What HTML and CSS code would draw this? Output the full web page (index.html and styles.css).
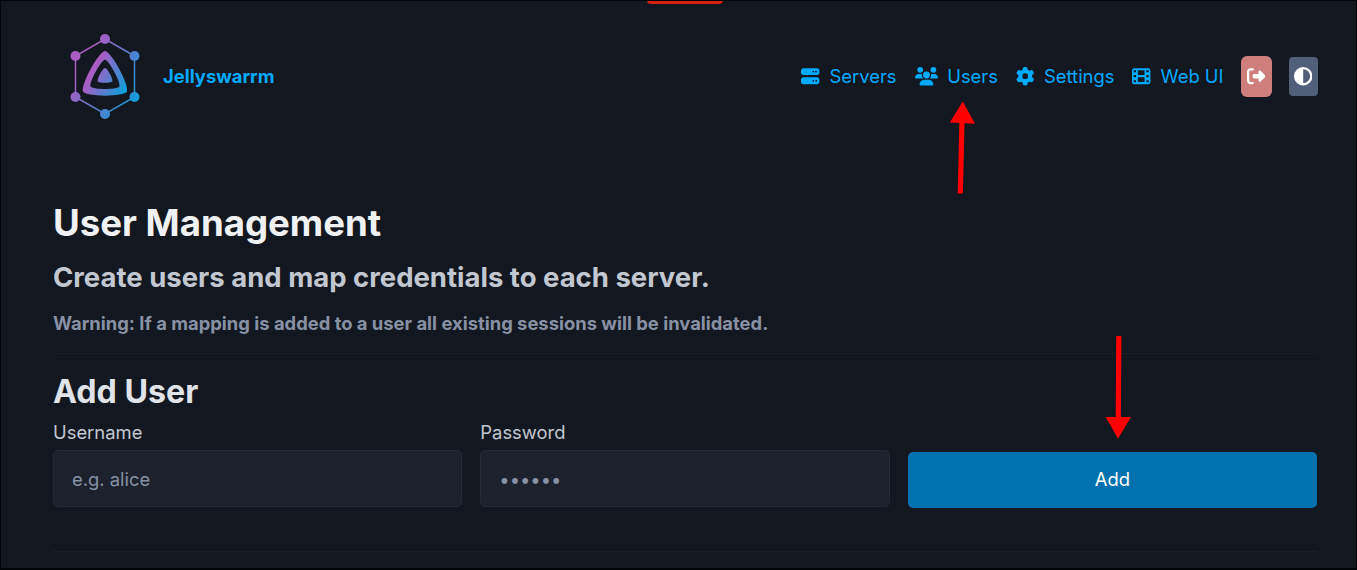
FILE: index.html
```html
<!DOCTYPE html>
<html lang="en">
<head>
<meta charset="utf-8">
<title>Jellyswarrm</title>
<link rel="stylesheet" href="styles.css">
</head>
<body>
<div class="page">
  <div class="top-indicator"></div>
  <header class="header">
    <a class="brand">
      <svg class="logo" viewBox="0 0 104 112">
        <defs>
          <linearGradient id="jelly" gradientUnits="userSpaceOnUse" x1="38" y1="54" x2="74" y2="74">
            <stop offset="0" stop-color="#aa5cc3"/><stop offset="1" stop-color="#00a4dc"/>
          </linearGradient>
          <linearGradient id="ring" gradientUnits="userSpaceOnUse" x1="30" y1="42" x2="94" y2="80">
            <stop offset="0" stop-color="#aa5cc3"/><stop offset="1" stop-color="#00a4dc"/>
          </linearGradient>
        </defs>
        <path d="M52 19 81.500 36V77L52 94 22.500 77V36Z" fill="none" stroke="url(#ring)" stroke-width="1.500"/>
        <g fill="url(#ring)">
          <circle cx="52" cy="19" r="5"/><circle cx="81.500" cy="36" r="5"/><circle cx="81.500" cy="77" r="5"/>
          <circle cx="52" cy="94" r="5"/><circle cx="22.500" cy="77" r="5"/><circle cx="22.500" cy="36" r="5"/>
        </g>
        <g fill="url(#jelly)" fill-rule="evenodd">
          <path d="M52 31C46 31 27.500 65 30 71.500C32.500 77 71.500 77 74 71.500C76.500 65 58 31 52 31ZM52 39.700C55.500 39.700 68 62 66.500 66.300C65 70 39 70 37.500 66.300C36 62 48.500 39.700 52 39.700Z"/>
          <path d="M52 48C49.500 48 43.700 59.500 44.700 61.500C45.700 63.200 58.300 63.200 59.300 61.500C60.300 59.500 54.500 48 52 48Z"/>
        </g>
      </svg>
      <strong class="brand-name">Jellyswarrm</strong>
    </a>
    <nav class="nav">
      <a class="nav-link"><svg class="icon" viewBox="0 0 512 512"><path d="M64 32C28.700 32 0 60.700 0 96v64c0 35.300 28.700 64 64 64H448c35.300 0 64-28.700 64-64V96c0-35.300-28.700-64-64-64H64zm280 72a24 24 0 1 1 0 48 24 24 0 1 1 0-48zm48 24a24 24 0 1 1 48 0 24 24 0 1 1 -48 0zM64 288c-35.300 0-64 28.700-64 64v64c0 35.300 28.700 64 64 64H448c35.300 0 64-28.700 64-64V352c0-35.300-28.700-64-64-64H64zm280 72a24 24 0 1 1 0 48 24 24 0 1 1 0-48zm56 24a24 24 0 1 1 48 0 24 24 0 1 1 -48 0z"/></svg>Servers</a>
      <a class="nav-link"><svg class="icon icon-wide" viewBox="0 0 640 512"><path d="M144 0a80 80 0 1 1 0 160A80 80 0 1 1 144 0zM512 0a80 80 0 1 1 0 160A80 80 0 1 1 512 0zM0 298.700C0 239.800 47.800 192 106.700 192h42.700c15.900 0 31 3.500 44.600 9.700c-1.300 7.200-1.900 14.700-1.900 22.300c0 38.200 16.800 72.500 43.300 96H21.300C9.600 320 0 310.400 0 298.700zM405.300 320c26.600-23.500 43.300-57.800 43.300-96c0-7.600-.7-15-1.900-22.300c13.600-6.300 28.700-9.700 44.600-9.700h42.700C592.200 192 640 239.800 640 298.700c0 11.800-9.600 21.300-21.300 21.300H405.300zM224 224a96 96 0 1 1 192 0 96 96 0 1 1 -192 0zM128 485.300C128 411.700 187.700 352 261.300 352H378.700C452.300 352 512 411.700 512 485.300c0 14.700-11.900 26.700-26.700 26.700H154.700c-14.700 0-26.700-11.900-26.700-26.700z"/></svg>Users</a>
      <a class="nav-link"><svg class="icon" viewBox="0 0 512 512"><path d="M495.900 166.600c3.200 8.700 .5 18.400-6.400 24.600l-43.300 39.400c1.100 8.300 1.700 16.800 1.700 25.400s-.6 17.100-1.700 25.400l43.300 39.400c6.900 6.200 9.600 15.900 6.400 24.600c-4.400 11.900-9.700 23.300-15.800 34.300l-4.700 8.100c-6.600 11-14 21.400-22.100 31.200c-5.900 7.200-15.700 9.600-24.500 6.800l-55.700-17.700c-13.400 10.300-28.200 18.900-44 25.400l-12.500 57.100c-2 9.100-9 16.300-18.200 17.800c-13.800 2.300-28 3.500-42.500 3.500s-28.700-1.200-42.500-3.500c-9.200-1.500-16.200-8.700-18.200-17.800l-12.500-57.100c-15.800-6.500-30.600-15.100-44-25.400L83.100 425.900c-8.800 2.800-18.600 .3-24.500-6.800c-8.100-9.800-15.500-20.200-22.100-31.200l-4.700-8.100c-6.100-11-11.400-22.400-15.800-34.300c-3.200-8.700-.5-18.400 6.400-24.600l43.300-39.400C64.600 273.100 64 264.600 64 256s.6-17.100 1.700-25.400L22.400 191.200c-6.900-6.200-9.600-15.900-6.400-24.600c4.400-11.900 9.700-23.300 15.800-34.300l4.700-8.100c6.600-11 14-21.400 22.100-31.200c5.900-7.200 15.700-9.600 24.500-6.800l55.700 17.700c13.400-10.300 28.200-18.900 44-25.400l12.500-57.100c2-9.100 9-16.300 18.200-17.800C227.300 1.200 241.500 0 256 0s28.700 1.200 42.500 3.500c9.200 1.500 16.200 8.700 18.200 17.800l12.500 57.100c15.800 6.500 30.600 15.100 44 25.400l55.700-17.700c8.800-2.800 18.600-.3 24.500 6.800c8.100 9.800 15.500 20.200 22.100 31.200l4.700 8.100c6.100 11 11.400 22.400 15.800 34.300zM256 336a80 80 0 1 0 0-160 80 80 0 1 0 0 160z"/></svg>Settings</a>
      <a class="nav-link"><svg class="icon" viewBox="0 0 512 512"><path fill-rule="evenodd" d="M64 32H448a64 64 0 0 1 64 64V416a64 64 0 0 1-64 64H64a64 64 0 0 1-64-64V96a64 64 0 0 1 64-64ZM48 96V144H112V88H56ZM48 226V286H112V226ZM48 368V424H112V368ZM400 88V144H464V88ZM400 226V286H464V226ZM400 368V424H464V368ZM164 92V226H348V92ZM164 286V420H348V286Z"/></svg>Web UI</a>
      <button class="nav-button logout" aria-label="Log out"><svg class="icon" viewBox="0 0 512 512"><path d="M377.900 105.900L500.700 228.700c7.200 7.200 11.300 17.100 11.300 27.300s-4.100 20.100-11.300 27.300L377.900 406.100c-6.400 6.400-15 9.900-24 9.900c-18.700 0-33.900-15.200-33.900-33.900l0-62.100-128 0c-17.700 0-32-14.300-32-32l0-64c0-17.700 14.300-32 32-32l128 0 0-62.100c0-18.700 15.200-33.900 33.900-33.900c9 0 17.600 3.600 24 9.900zM160 96L96 96c-17.700 0-32 14.300-32 32l0 256c0 17.700 14.300 32 32 32l64 0c17.700 0 32 14.300 32 32s-14.300 32-32 32l-64 0c-53 0-96-43-96-96L0 128C0 75 43 32 96 32l64 0c17.700 0 32 14.300 32 32s-14.300 32-32 32z"/></svg></button>
      <button class="nav-button theme" aria-label="Toggle theme"><svg class="icon" viewBox="0 0 512 512"><path d="M448 256c0-106-86-192-192-192V448c106 0 192-86 192-192zM0 256a256 256 0 1 1 512 0A256 256 0 1 1 0 256z"/></svg></button>
    </nav>
  </header>
  <main class="main">
    <h1 class="title">User Management</h1>
    <h3 class="subtitle">Create users and map credentials to each server.</h3>
    <h6 class="warning">Warning: If a mapping is added to a user all existing sessions will be invalidated.</h6>
    <hr class="rule">
    <h2 class="section-title">Add User</h2>
    <form class="form">
      <label class="field">Username<input class="input" type="text" placeholder="e.g. alice"></label>
      <label class="field">Password<input class="input" type="password" placeholder="••••••"></label>
      <button class="submit" type="button">Add</button>
    </form>
    <hr class="rule rule-end">
  </main>
  <svg class="arrows" viewBox="0 0 1357 570">
    <path d="M960.300 193.500 962 120" /><path class="arrow-head" d="M962.800 101.500 975 123.700 949.800 122.500Z"/>
    <path d="M1118.800 336 1118.300 420"/><path class="arrow-head" d="M1105.700 417H1131L1118 438.500Z"/>
  </svg>
</div>
</body>
</html>
```
FILE: styles.css
```css
* { box-sizing: border-box; }
body { margin: 0; background: #000; font-family: Inter, "Liberation Sans", sans-serif; font-size: 18.4px; line-height: 27.6px; color: #c2c7d0; }
.page { position: relative; height: 570px; padding: 0 38.5px 0 52px; border: 1px solid #030407; border-bottom-width: 2px; background: #13171f; overflow: hidden; }
.top-indicator { position: absolute; top: -1px; left: 646px; width: 76px; height: 4px; border-radius: 0 0 4px 4px; background: #d92113; border-top: 1px solid #4a0d08; }
.header { display: flex; justify-content: space-between; align-items: center; height: 151px; }
.brand { display: flex; align-items: center; gap: 6px; color: #01aaff; }
.logo { width: 104px; height: 112px; margin: -1px 0 1px; }
.brand-name { font-weight: 700; }
.nav { display: flex; align-items: center; }
.nav-link { display: flex; align-items: center; gap: 9.7px; margin-right: 18px; color: #01aaff; }
.nav-link:nth-child(4) { margin-right: 17px; }
.icon { display: block; width: 18.4px; height: 18.4px; fill: currentColor; }
.icon-wide { width: 23px; }
.nav-button { display: flex; align-items: center; justify-content: center; border: 0; padding: 0; color: #fff; }
.logout { width: 31px; height: 41px; border-radius: 6px; background: #ce7e7b; margin-right: 17px; }
.theme { width: 29px; height: 39px; border-radius: 4px; background: #525f7a; }
.main { padding: 50px 0.5px 0 0; }
h1, h2, h3, h6 { margin: 0; font-weight: 700; }
.title { font-size: 36.6px; line-height: 42px; color: #f0f1f3; }
.subtitle { margin-top: 16px; font-size: 27.5px; line-height: 34px; color: #c2c7d0; }
.warning { margin-top: 17px; font-size: 18.4px; line-height: 25px; color: #8891a4; }
.rule { height: 1px; margin: 17px 0 18px; border: 0; background: #1a1f29; }
.section-title { font-size: 32.2px; line-height: 40px; color: #e0e3e7; }
.form { display: grid; grid-template-columns: repeat(3, 1fr); gap: 18px; align-items: end; margin-top: 7px; }
.field { display: flex; flex-direction: column; gap: 4px; padding-bottom: 1px; line-height: 27px; }
.input { width: 100%; height: 57px; padding: 0 18px; border: 1px solid #242a37; border-radius: 5px; background: #1c212c; color: #c2c7d0; font: inherit; }
.input::placeholder { color: #8891a4; opacity: 1; }
.submit { height: 56px; padding: 0; border: 0; border-radius: 5px; background: #0172ad; color: #fff; font: inherit; }
.rule-end { margin: 43px 0 0; }
.arrows { position: absolute; left: -1px; top: -1px; width: 1357px; height: 570px; pointer-events: none; fill: none; stroke: #f00; stroke-width: 5.2; }
.arrow-head { fill: #f00; stroke: none; }
```
